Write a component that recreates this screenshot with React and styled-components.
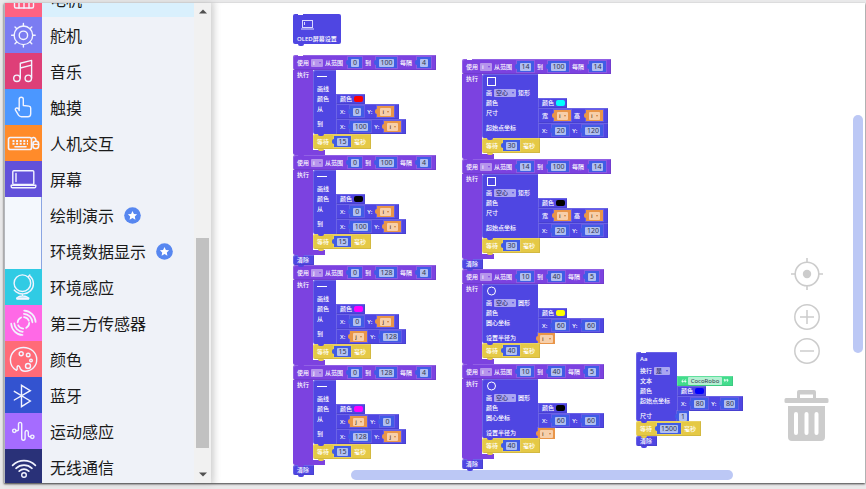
import React from 'react';
import styled, { createGlobalStyle, css } from 'styled-components';

const GlobalStyle = createGlobalStyle`
  *, *::before, *::after { box-sizing: border-box; }
  html, body, #root { height: 100%; }
  body {
    margin: 0;
    background: #e9e9ea;
    font-family: "Noto Sans", "Noto Sans CJK SC", sans-serif;
  }
  button, input, select { font: inherit; margin: 0; padding: 0; border: 0; background: none; color: inherit; }
`;

const C = {
  loop: '#7c42e0',
  display: '#4f46e2',
  number: '#405ce6',
  numberField: '#b0bff0',
  variable: '#e99548',
  variableField: '#f7cfaa',
  wait: '#e5c946',
  text: '#42dc8c',
};

/* ---------- window ---------- */

const Page = styled.div`
  height: 100vh;
  padding: 3px 1px 6px 4px;
`;

const Window = styled.div`
  display: flex;
  height: 100%;
  background: #fff;
  border-left: 1px solid #b9bcc2;
  box-shadow: 0 1px 2px rgba(0, 0, 0, 0.75);
`;

/* ---------- sidebar ---------- */

const Sidebar = styled.nav`
  display: flex;
  flex: none;
  width: 206px;
  overflow: hidden;
  background: #eff2f8;
  box-shadow: 2px 0 8px rgba(0, 0, 0, 0.12);
`;

const CategoryList = styled.ul`
  flex: 1;
  list-style: none;
  margin: -22px 0 0;
  padding: 0;
`;

const Category = styled.button`
  display: flex;
  align-items: center;
  width: 100%;
  height: 36px;
  background: ${(p) => (p.$active ? '#d9f0fd' : 'transparent')};
  color: #1a1a1a;
  font-family: "Noto Sans CJK SC", sans-serif;
  font-size: 16px;
  font-weight: 400;
  line-height: 24px;
  text-align: left;
`;

const CategoryIcon = styled.span`
  width: 37px;
  height: 36px;
  margin-right: 8px;
  background: ${(p) => p.$color || '#f4f8fd'};
  border-right: ${(p) => (p.$color ? '0' : '1px solid #8aa5e2')};

  svg { display: block; }
`;

const StarBadge = styled.svg`
  margin-left: 10px;
`;

const ScrollTrack = styled.div`
  display: flex;
  flex-direction: column;
  width: 17px;
  background: #f1f1f1;
`;

const ScrollButton = styled.button`
  display: grid;
  place-items: center;
  height: 17px;
`;

const TrackSpace = styled.div`
  flex: ${(p) => p.$share} 1 0;
`;

const ScrollThumb = styled.div`
  flex: 210 1 0;
  margin: 0 2px;
  background: #c1c1c1;
`;

const IconSvg = ({ children }) => (
  <svg width="37" height="36" viewBox="0 0 37 36" fill="none" stroke="#f2f4ff" strokeWidth="1.4" strokeLinecap="round" strokeLinejoin="round">
    {children}
  </svg>
);

const icons = {
  motor: (
    <IconSvg>
      <rect x="9.5" y="10" width="19" height="17" rx="1.5" />
      <path d="M14 14v13M19 14v13M24 14v13M12 8h14" />
    </IconSvg>
  ),
  servo: (
    <IconSvg>
      <circle cx="18.4" cy="18.3" r="9.3" />
      <circle cx="18.4" cy="18.3" r="4.2" />
      <path d="M18.4 9V6.500M18.400 27.600v2.500M9.100 18.300H6.600M27.700 18.300h2.500M11.800 11.700L10 9.900M25 11.700l1.800-1.800M11.800 24.900L10 26.700M25 24.900l1.800 1.800" />
    </IconSvg>
  ),
  music: (
    <IconSvg>
      <circle cx="11.900" cy="25.300" r="3.200" />
      <circle cx="23.300" cy="25.300" r="3.200" />
      <path d="M15.300 25V10.200L26.600 7.400V25M15.300 15l11.300-2.900" />
    </IconSvg>
  ),
  touch: (
    <IconSvg>
      <path d="M14.200 21.500V10.300a2 2 0 0 1 4.100 0v6.200l5.600.6a2 2 0 0 1 1.800 2v5.700c0 1.800-1 2.900-2.700 2.900h-6.600c-1.500 0-2.200-.4-2.900-1.500l-3-5c-.6-1.200 0-2 1-2.200 1-.1 1.600.2 2.200 1z" />
    </IconSvg>
  ),
  keyboard: (
    <IconSvg>
      <rect x="3.500" y="12.500" width="23" height="12" rx="1.800" strokeWidth="1.600" />
      <path d="M7.500 16h15.500M7.500 18.800h15.500" strokeWidth="1.900" strokeDasharray="2 1.600" strokeLinecap="butt" />
      <path d="M10 21.800h11" strokeWidth="1.600" />
      <path d="M26.500 14c0-2 4.500-2.500 4.500 2" />
      <rect x="28" y="16.200" width="5.600" height="7.300" rx="2.500" strokeWidth="1.600" />
      <path d="M28 19.400h5.600" />
    </IconSvg>
  ),
  screen: (
    <IconSvg>
      <rect x="7.800" y="9.700" width="21" height="13.700" rx="1" />
      <path d="M11 12.500v8M6.200 24.200h24.600v1.200a1.300 1.300 0 0 1-1.300 1.300H7.500a1.300 1.300 0 0 1-1.300-1.300z" />
    </IconSvg>
  ),
  globe: (
    <IconSvg>
      <circle cx="17.400" cy="14.200" r="8.300" />
      <path d="M24.800 6l-1.300 1.500M25.300 7.200c4 4 4.200 10.500.3 14.500-4 4-10.300 4.200-14.400 1.200l-2-1.800M17.500 25v2M12 30c.5-4 10.500-4 11.500 0z" />
      <path d="M12 29.300h11.500" strokeWidth="2" />
    </IconSvg>
  ),
  sensor: (
    <IconSvg>
      <circle cx="18.400" cy="17.800" r="5.800" strokeDasharray="6.100 3" strokeWidth="1.700" />
      <path d="M18.900 8.800a9 9 0 0 1 8.500 8.500M19.200 5.600a12 12 0 0 1 11.400 11.400M9.300 18.300a9 9 0 0 0 8.500 8.500M6.200 18.700a12 12 0 0 0 11.400 11.300" strokeWidth="1.700" />
    </IconSvg>
  ),
  palette: (
    <IconSvg>
      <path d="M11.500 29.300C7 27 5.300 23 5.400 18.600 5.600 11.500 11.200 6.500 18.500 6.500c7.300 0 13 5 13.200 11.800.2 6.800-5 12-11.600 12-3 0-4.600-1.300-5.300-4-.4-1.600-1.700-2-2.500-.8-.8 1.200.8 2.500-.8 3.800z" />
      <circle cx="16.200" cy="12.800" r="2" />
      <circle cx="23.200" cy="14" r="1.800" />
      <circle cx="26" cy="19.500" r="1.300" />
      <circle cx="23" cy="25" r="2.500" />
    </IconSvg>
  ),
  bluetooth: (
    <IconSvg>
      <path d="M9.300 14.300l16 9.700-8.800 5.700V8.300l8.800 5.400-16 9.300" strokeLinejoin="miter" />
    </IconSvg>
  ),
  motion: (
    <IconSvg>
      <circle cx="9.300" cy="17.800" r="1.700" />
      <circle cx="27.300" cy="23.800" r="1.700" />
      <path d="M11 17.800h1.200c1 0 1.300-.5 1.300-1.500v-5c0-2.600 3.200-2.600 3.200 0v14c0 2.600 3.400 2.600 3.400 0v-6c0-2.500 3.200-2.500 3.200 0v2.800c0 1.200.3 1.700 1.300 1.700h1" />
    </IconSvg>
  ),
  wifi: (
    <IconSvg>
      <circle cx="19" cy="26" r="2.300" />
      <path d="M7.600 16.300c6.400-6.300 16.400-6.300 22.800 0M11 19.300c4.600-4.200 11.400-4.200 16 0M14.200 22.200c2.900-2.400 6.700-2.400 9.600 0" strokeWidth="1.700" />
    </IconSvg>
  ),
};

const categories = [
  { name: '电机', icon: 'motor', color: '#ff6282', active: true },
  { name: '舵机', icon: 'servo', color: '#7b7cf2' },
  { name: '音乐', icon: 'music', color: '#de3f78' },
  { name: '触摸', icon: 'touch', color: '#4b97ff' },
  { name: '人机交互', icon: 'keyboard', color: '#ff8b2a' },
  { name: '屏幕', icon: 'screen', color: '#6251da' },
  { name: '绘制演示', star: true },
  { name: '环境数据显示', star: true },
  { name: '环境感应', icon: 'globe', color: '#30cbe4' },
  { name: '第三方传感器', icon: 'sensor', color: '#ff69e6' },
  { name: '颜色', icon: 'palette', color: '#ff6b78' },
  { name: '蓝牙', icon: 'bluetooth', color: '#3353d0' },
  { name: '运动感应', icon: 'motion', color: '#a56cff' },
  { name: '无线通信', icon: 'wifi', color: '#293178' },
];

const Star = () => (
  <StarBadge width="17" height="17" viewBox="0 0 17 17" aria-hidden="true">
    <circle cx="8.500" cy="8.500" r="8.300" fill="#5787f0" />
    <path d="M8.500 4l1.400 2.900 3.200.4-2.300 2.200.6 3.200-2.900-1.600-2.900 1.600.6-3.200-2.300-2.200 3.200-.4z" fill="#fff" />
  </StarBadge>
);

/* ---------- workspace ---------- */

const Workspace = styled.main`
  position: relative;
  flex: 1;
  overflow: hidden;
  box-shadow: inset 8px 0 8px -6px rgba(0, 0, 0, 0.12);
`;

const Stack = styled.div`
  position: absolute;
  left: ${(p) => p.$x}px;
  top: ${(p) => p.$y}px;
  display: flex;
  flex-direction: column;
  align-items: flex-start;
  color: #fff;
  font-size: 6px;
  font-weight: 500;
  line-height: 10px;
  white-space: nowrap;

  &::before {
    content: '';
    position: absolute;
    z-index: 1;
    left: 5px;
    top: 0;
    width: 5px;
    height: 1px;
    background: #fff;
  }
`;

const tab = css`
  position: relative;

  &::after {
    content: '';
    position: absolute;
    z-index: 1;
    left: 5px;
    bottom: -2px;
    width: 6px;
    height: 2px;
    border-radius: 0 0 2px 2px;
    background: ${(p) => p.$color};
  }
`;

const bevel = css`
  box-shadow: inset 1px 1px rgba(255, 255, 255, 0.16), inset -1px -1px rgba(0, 0, 0, 0.08);
`;

const Bar = styled.div`
  ${bevel}
  display: flex;
  align-items: center;
  height: ${(p) => (p.$slim ? 10 : 15)}px;
  padding: 0 2px 0 4px;
  border-radius: 2px 0 0 2px;
  background: ${(p) => p.$color};
`;

const Statement = styled(Bar)`
  ${tab}
  padding-right: 5px;
`;

const Loop = styled.section`
  ${tab}
  display: flex;
  flex-direction: column;
  align-items: flex-start;
`;

const LoopBody = styled.div`
  display: flex;
  align-items: stretch;
`;

const LoopArm = styled.div`
  width: 20px;
  padding-left: 4px;
  background: ${C.loop};
`;

const LoopContent = styled.div`
  display: flex;
  flex-direction: column;
  align-items: flex-start;
`;

const LoopFoot = styled.div`
  width: 32px;
  height: 6px;
  border-radius: 0 0 0 2px;
  background: linear-gradient(#fff, #fff) 20px 0 / 12px 1px no-repeat ${C.loop};
`;

const FormBlock = styled.div`
  ${tab}
  width: ${(p) => p.$width}px;
  border-radius: 2px 0 0 2px;
  background: ${(p) => p.$color};
  box-shadow: inset 1px 1px rgba(255, 255, 255, 0.16);
`;

const FormHead = styled.div`
  display: flex;
  flex-direction: column;
  justify-content: space-between;
  height: 24px;
  padding: 2px 0 0 4px;

  svg { display: block; }
`;

const FormTitle = styled.div`
  display: flex;
  align-items: center;
  gap: 2px;
  height: 10px;
`;

const FormRow = styled.div`
  display: flex;
  align-items: flex-start;
  height: ${(p) => (p.$slim ? 10 : 15)}px;
`;

const FormLabel = styled.span`
  flex: none;
  width: 100%;
  padding-left: 4px;
`;

const Value = styled(Bar)`
  flex: none;
  border-radius: 0;
`;

const AxisLabel = styled.span`
  min-width: ${(p) => (p.$wide ? 7 : 5)}px;
`;

const Socket = styled.span`
  position: relative;
  display: flex;
  align-items: center;
  flex: none;
  width: ${(p) => p.$width}px;
  height: 11px;
  margin: ${(p) => (p.$bare ? '0' : '0 3px 0 5px')};
  padding: 0 ${(p) => (p.$bare ? 2 : 3)}px;
  background: ${(p) => p.$color};
  box-shadow: 0 0 0 1px rgba(255, 255, 255, 0.12);

  &::before {
    content: '';
    position: absolute;
    left: -2px;
    top: 3px;
    width: 2px;
    height: 5px;
    border-radius: 2px 0 0 2px;
    background: ${(p) => p.$color};
  }
`;

const Entry = styled.input`
  width: 100%;
  height: 8px;
  border-radius: 1px;
  background: ${(p) => p.$color};
  color: #33364f;
  font-size: ${(p) => (p.$text ? 6 : 7)}px;
  font-weight: 400;
  line-height: 8px;
  text-align: center;
`;

const Choice = styled.span`
  display: flex;
  align-items: center;
  flex: none;
  width: ${(p) => p.$width};
  height: 8px;
  padding: 0 2px;
  border-radius: 1px;
  background: ${(p) => p.$color};
  color: ${(p) => p.$ink};

  &::after {
    content: '';
    flex: none;
    border: 1px solid transparent;
    border-top: 2px solid ${(p) => p.$arrow};
    border-bottom: 0;
  }

  select {
    flex: 1;
    min-width: 0;
    height: 8px;
    appearance: none;
    font-weight: 500;
    line-height: 8px;
    outline: 0;
  }
`;

const LoopChoice = styled.span`
  display: flex;
  margin: 0 2px;
`;

const Swatch = styled.button`
  width: 9px;
  height: 6px;
  margin-left: 2px;
  border-radius: 2px;
  background: ${(p) => p.$color};
`;

const QuoteBlock = styled(Bar)`
  flex: none;
  gap: 1px;
  padding: 0 4px;
  border-radius: 0;

  input { width: 34px; }
`;

const HeadBlock = styled.div`
  ${tab}
  display: flex;
  flex-direction: column;
  justify-content: space-between;
  height: 30px;
  padding: 6px 4px 0;
  border-radius: 2px;
  background: ${(p) => p.$color};

  svg { margin-left: 4px; }
`;

const numberWidths = { 1: 14, 2: 17, 3: 21, 4: 24 };

function Num({ value, label = '数字', bare }) {
  return (
    <Socket $color={C.number} $width={bare ? 12 : numberWidths[value.length]} $bare={bare}>
      <Entry $color={C.numberField} defaultValue={value} aria-label={label} />
    </Socket>
  );
}

function Var({ name, bare }) {
  return (
    <Socket $color={C.variable} $width={17} $bare={bare}>
      <Choice $width="100%" $color={C.variableField} $ink="#5b3a1c" $arrow="#d0803a">
        <select defaultValue={name} aria-label="变量">
          <option>{name}</option>
        </select>
      </Choice>
    </Socket>
  );
}

const Operand = ({ of, label }) => (/^\d+$/.test(of) ? <Num value={of} label={label} /> : <Var name={of} />);

function Pair({ labels = ['X:', 'Y:'], values }) {
  const wide = labels[0] !== 'X:';
  return (
    <Value $color={C.display}>
      <AxisLabel $wide={wide}>{labels[0]}</AxisLabel>
      <Operand of={values[0]} label={labels[0]} />
      <AxisLabel $wide={wide}>{labels[1]}</AxisLabel>
      <Operand of={values[1]} label={labels[1]} />
    </Value>
  );
}

function Colour({ value }) {
  return (
    <Value $color={C.display} $slim>
      颜色
      <Swatch $color={value} aria-label="颜色" />
    </Value>
  );
}

function Field({ label, slim, children }) {
  return (
    <FormRow $slim={slim}>
      <FormLabel>{label}</FormLabel>
      {children}
    </FormRow>
  );
}

function Wait({ ms }) {
  return (
    <Statement $color={C.wait}>
      等待
      <Num value={ms} label="毫秒" />
      毫秒
    </Statement>
  );
}

const Clear = () => <Statement $color={C.display} $slim>清除</Statement>;

function For({ name, from, to, step, children }) {
  return (
    <Loop $color={C.loop}>
      <Bar $color={C.loop}>
        使用
        <LoopChoice>
          <Choice $width="12px" $color="#b694ec" $ink="#fff" $arrow="#7c42e0">
            <select defaultValue={name} aria-label="变量">
              <option>{name}</option>
            </select>
          </Choice>
        </LoopChoice>
        从范围
        <Num value={from} label="从" />
        到
        <Num value={to} label="到" />
        每隔
        <Num value={step} label="每隔" />
      </Bar>
      <LoopBody>
        <LoopArm>执行</LoopArm>
        <LoopContent>{children}</LoopContent>
      </LoopBody>
      <LoopFoot />
    </Loop>
  );
}

function DrawLine({ color, from, to }) {
  return (
    <FormBlock $color={C.display} $width={23}>
      <FormHead>
        <svg width="10" height="10" viewBox="0 0 10 10"><path d="M0 4.500h10" stroke="#fff" /></svg>
        <FormTitle>画线</FormTitle>
      </FormHead>
      <Field label="颜色" slim><Colour value={color} /></Field>
      <Field label="从"><Pair values={from} /></Field>
      <Field label="到"><Pair values={to} /></Field>
    </FormBlock>
  );
}

function ShapeHead({ name, children }) {
  return (
    <FormHead>
      <svg width="10" height="10" viewBox="0 0 10 10" fill="none" stroke="#fff">{children}</svg>
      <FormTitle>
        画
        <Choice $width="22px" $color="#a9a5f1" $ink="#2f2d6b" $arrow="#4f46e2">
          <select defaultValue="空心" aria-label="填充">
            <option>空心</option>
            <option>实心</option>
          </select>
        </Choice>
        {name}
      </FormTitle>
    </FormHead>
  );
}

function DrawRect({ color }) {
  return (
    <FormBlock $color={C.display} $width={56}>
      <ShapeHead name="矩形"><rect x="1.500" y="1.500" width="8" height="8" /></ShapeHead>
      <Field label="颜色" slim><Colour value={color} /></Field>
      <Field label="尺寸"><Pair labels={['宽', '高']} values={['i', 'i']} /></Field>
      <Field label="起始点坐标"><Pair values={['20', '120']} /></Field>
    </FormBlock>
  );
}

function DrawCircle({ color }) {
  return (
    <FormBlock $color={C.display} $width={56}>
      <ShapeHead name="圆形"><circle cx="5.500" cy="5" r="4" /></ShapeHead>
      <Field label="颜色" slim><Colour value={color} /></Field>
      <Field label="圆心坐标"><Pair values={['60', '60']} /></Field>
      <Field label="设置半径为" slim><Var name="i" bare /></Field>
    </FormBlock>
  );
}

function PrintText() {
  return (
    <FormBlock $color={C.display} $width={41}>
      <FormHead>
        <span>Aa</span>
        <FormTitle>
          换行
          <Choice $width="16px" $color="#a9a5f1" $ink="#2f2d6b" $arrow="#4f46e2">
            <select defaultValue="是" aria-label="换行">
              <option>是</option>
              <option>否</option>
            </select>
          </Choice>
        </FormTitle>
      </FormHead>
      <Field label="文本" slim>
        <QuoteBlock $color={C.text} $slim>
          <QuoteMark />
          <Entry $text $color="#b4f0d2" defaultValue="CocoRobo" aria-label="文本" />
          <QuoteMark close />
        </QuoteBlock>
      </Field>
      <Field label="颜色" slim><Colour value="#0000ff" /></Field>
      <Field label="起始点坐标"><Pair values={['80', '80']} /></Field>
      <Field label="尺寸" slim><Num value="1" label="尺寸" bare /></Field>
    </FormBlock>
  );
}

const QuoteMark = ({ close }) => (
  <svg width="6" height="6" viewBox="0 0 6 6" fill="#e8fff3" stroke="#e8fff3" strokeWidth=".7">
    {close ? (
      <>
        <circle cx="1.700" cy="2" r=".7" /><circle cx="4.300" cy="2" r=".7" />
        <path d="M2.300 2Q2.300 3.500 1.200 4.200M4.900 2Q4.900 3.500 3.800 4.200" fill="none" />
      </>
    ) : (
      <>
        <circle cx="1.700" cy="3.500" r=".7" /><circle cx="4.300" cy="3.500" r=".7" />
        <path d="M1.100 3.500Q1.100 2 2.200 1.300M3.700 3.500Q3.700 2 4.800 1.300" fill="none" />
      </>
    )}
  </svg>
);

const WorkspaceScroll = styled.div`
  position: absolute;
  border-radius: 5px;
  background: #bcc8f5;
  ${(p) =>
    p.$horizontal
      ? 'left: 140px; right: 132px; bottom: 3px; height: 10px;'
      : 'top: 112px; bottom: 130px; right: 2px; width: 10px;'}
`;

const Controls = styled.div`
  position: absolute;
  right: 36px;
  bottom: 42px;
  display: flex;
  flex-direction: column;
  align-items: center;
`;

const Control = styled.button`
  display: block;
  margin-bottom: ${(p) => p.$gap || 0}px;

  svg { display: block; }
`;

export default function App() {
  return (
    <Page>
      <GlobalStyle />
      <Window>
        <Sidebar>
          <CategoryList>
            {categories.map((c) => (
              <li key={c.name}>
                <Category $active={c.active}>
                  <CategoryIcon $color={c.color}>{c.icon && icons[c.icon]}</CategoryIcon>
                  {c.name}
                  {c.star && <Star />}
                </Category>
              </li>
            ))}
          </CategoryList>
          <ScrollTrack>
            <ScrollButton aria-label="向上滚动">
              <svg width="8" height="5" viewBox="0 0 8 5"><path d="M0 4.500L4 .5l4 4z" fill="#505050" /></svg>
            </ScrollButton>
            <TrackSpace $share={218} />
            <ScrollThumb />
            <TrackSpace $share={18} />
            <ScrollButton aria-label="向下滚动">
              <svg width="8" height="5" viewBox="0 0 8 5"><path d="M0 .5L4 4.500l4-4z" fill="#505050" /></svg>
            </ScrollButton>
          </ScrollTrack>
        </Sidebar>

        <Workspace>
          <Stack $x={82} $y={11}>
            <HeadBlock $color={C.display}>
              <svg width="13" height="10" viewBox="0 0 13 10" fill="none" stroke="#d9d8ff">
                <rect x="1.500" y=".5" width="10" height="7" />
                <path d="M3.500 2v3M0 9h13" />
              </svg>
              OLED屏幕设置
            </HeadBlock>
          </Stack>

          <Stack $x={82} $y={52}>
            <For name="i" from="0" to="100" step="4">
              <DrawLine color="#ff0000" from={['0', 'i']} to={['100', 'i']} />
              <Wait ms="15" />
            </For>
            <For name="i" from="0" to="100" step="4">
              <DrawLine color="#000000" from={['0', 'i']} to={['100', 'i']} />
              <Wait ms="15" />
            </For>
            <Clear />
            <For name="j" from="0" to="128" step="4">
              <DrawLine color="#ff00ff" from={['0', 'j']} to={['j', '128']} />
              <Wait ms="15" />
            </For>
            <For name="j" from="0" to="128" step="4">
              <DrawLine color="#ff00ff" from={['j', '0']} to={['128', 'j']} />
              <Wait ms="15" />
            </For>
            <Clear />
          </Stack>

          <Stack $x={251} $y={56}>
            <For name="i" from="14" to="100" step="14">
              <DrawRect color="#00ffff" />
              <Wait ms="30" />
            </For>
            <For name="i" from="14" to="100" step="14">
              <DrawRect color="#000000" />
              <Wait ms="30" />
            </For>
            <Clear />
            <For name="i" from="10" to="40" step="5">
              <DrawCircle color="#ffff00" />
              <Wait ms="40" />
            </For>
            <For name="i" from="10" to="40" step="5">
              <DrawCircle color="#000000" />
              <Wait ms="40" />
            </For>
            <Clear />
          </Stack>

          <Stack $x={425} $y={349}>
            <PrintText />
            <Wait ms="1500" />
            <Clear />
          </Stack>

          <Controls>
            <Control aria-label="居中" $gap={14}>
              <svg width="32" height="32" viewBox="0 0 32 32" fill="none" stroke="#ccc" strokeWidth="1.600">
                <circle cx="16" cy="16" r="11.800" />
                <circle cx="16" cy="16" r="4.200" fill="#ccc" stroke="none" />
                <path d="M16 0v5M16 27v5M0 16h5M27 16h5" />
              </svg>
            </Control>
            <Control aria-label="放大" $gap={8}>
              <svg width="26" height="26" viewBox="0 0 26 26" fill="none" stroke="#ccc" strokeWidth="1.500">
                <circle cx="13" cy="13" r="12.200" />
                <path d="M6 13h14M13 6v14" />
              </svg>
            </Control>
            <Control aria-label="缩小" $gap={26}>
              <svg width="26" height="26" viewBox="0 0 26 26" fill="none" stroke="#ccc" strokeWidth="1.500">
                <circle cx="13" cy="13" r="12.200" />
                <path d="M6 13h14" />
              </svg>
            </Control>
            <Control aria-label="删除">
              <svg width="45" height="51" viewBox="0 0 45 51" fill="#ccc">
                <path fillRule="evenodd" d="M13 8V2q0-2 2-2h15q2 0 2 2v6h11q1.500 0 1.500 1.500v2.300q0 1.200-1.500 1.200H2q-1.500 0-1.500-1.200V9.500Q.5 8 2 8zm3 0h13V4.500H16z" />
                <path fillRule="evenodd" d="M4 16h37v31q0 4-4 4H8q-4 0-4-4zm8 6q-2 0-2 2v19q0 2 2 2t2-2V24q0-2-2-2zm10.500 0q-2 0-2 2v19q0 2 2 2t2-2V24q0-2-2-2zm10 0q-2 0-2 2v19q0 2 2 2t2-2V24q0-2-2-2z" />
              </svg>
            </Control>
          </Controls>

          <WorkspaceScroll />
          <WorkspaceScroll $horizontal />
        </Workspace>
      </Window>
    </Page>
  );
}
